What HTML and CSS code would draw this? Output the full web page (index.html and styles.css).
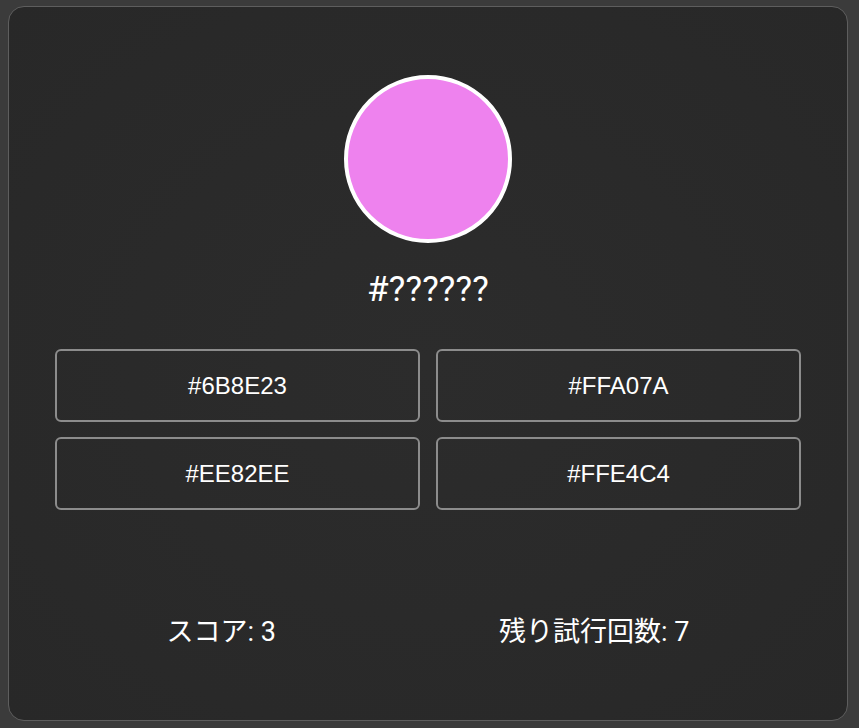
FILE: index.html
```html
<!DOCTYPE html>
<html lang="ja">
<head>
<meta charset="utf-8">
<title>カラー当てゲーム</title>
<link rel="stylesheet" href="styles.css">
</head>
<body>
<main class="card">
  <div class="swatch"></div>
  <div class="hex">#??????</div>
  <div class="options">
    <button class="option">#6B8E23</button>
    <button class="option">#FFA07A</button>
    <button class="option">#EE82EE</button>
    <button class="option">#FFE4C4</button>
  </div>
  <div class="stats">
    <span class="stat">スコア: 3</span>
    <span class="stat">残り試行回数: 7</span>
  </div>
</main>
</body>
</html>
```
FILE: styles.css
```css
html, body {
  margin: 0;
  padding: 0;
  background: #3b3b3b;
}
body {
  padding: 6px 8px;
}
.card {
  box-sizing: border-box;
  width: 840px;
  height: 715px;
  background: radial-gradient(ellipse at center, #2c2c2c 0%, #282828 100%);
  border: 1px solid #5e5e5e;
  border-radius: 16px;
  padding: 68px 46px 0;
  display: flex;
  flex-direction: column;
  align-items: center;
  color: #fff;
}
.swatch {
  box-sizing: border-box;
  width: 168px;
  height: 168px;
  border-radius: 50%;
  border: 4px solid #fff;
  background: #ee82ee;
}
.hex {
  margin-top: 26px;
  font-family: Roboto, "Noto Sans CJK JP", sans-serif;
  font-size: 35px;
  line-height: 42px;
  letter-spacing: 0.2px;
}
.options {
  margin-top: 38px;
  align-self: stretch;
  display: grid;
  grid-template-columns: 1fr 1fr;
  grid-auto-rows: 73px;
  gap: 15px 16px;
}
.option {
  background: transparent;
  border: 2px solid #8c8c8c;
  border-radius: 6px;
  color: #fff;
  font-family: "Liberation Sans", Arial, sans-serif;
  font-size: 24px;
}
.stats {
  margin-top: 107px;
  align-self: stretch;
  display: flex;
  justify-content: space-around;
  font-family: Roboto, "Noto Sans CJK JP", sans-serif;
  font-size: 27px;
  line-height: 30px;
}
```
